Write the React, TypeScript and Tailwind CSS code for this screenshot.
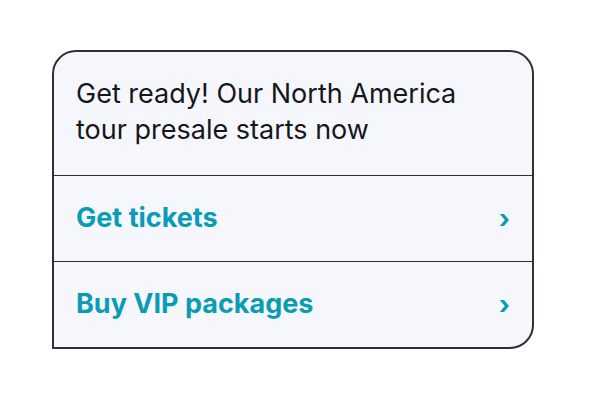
import React from "react";

const links = ["Get tickets", "Buy VIP packages"];

export default function App() {
  return (
    <div
      className="w-[608px] h-[400px] bg-white pt-[50px] pl-[52px]"
      style={{ fontFamily: "Inter, 'Noto Sans', sans-serif" }}
    >
      <div className="w-[482px] rounded-tl-[24px] rounded-tr-[24px] rounded-br-[24px] border-2 border-[#2f3034] bg-[#f5f7fc] overflow-hidden">
        {/* Message */}
        <div className="h-[123px] px-[22px] pt-[24px] text-[27px] leading-[36px] text-[#16171a]">
          Get ready! Our North America
          <br />
          tour presale starts now
        </div>

        {/* Links */}
        {links.map((label) => (
          <div
            key={label}
            className="h-[86px] border-t-[1.5px] border-[#2f3034] flex items-center justify-between pl-[22px] pr-[22px] text-[#0a9bb5]"
          >
            <span className="text-[27px] font-bold">{label}</span>
            <span className="text-[26px] font-bold leading-none">›</span>
          </div>
        ))}
      </div>
    </div>
  );
}
